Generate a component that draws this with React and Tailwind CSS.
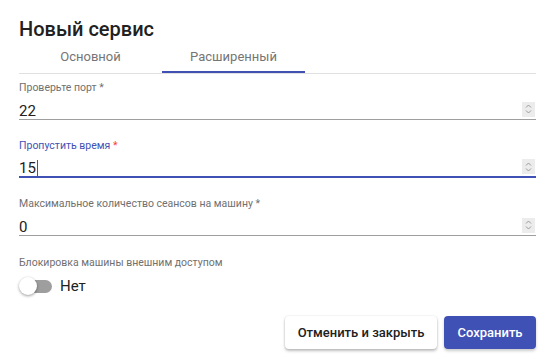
import React, { useState } from 'react';

function Spinner() {
  return (
    <div className="flex h-[15px] w-[13px] flex-col items-center justify-center bg-[#ececec]">
      <svg width="7" height="12" viewBox="0 0 7 12" fill="none" stroke="#9a9a9a" strokeWidth="1">
        <path d="M1 4.5 L3.5 2 L6 4.5" />
        <path d="M1 7.5 L3.5 10 L6 7.5" />
      </svg>
    </div>
  );
}

function NumberField({ label, value, focused }) {
  return (
    <div className="flex flex-col">
      <div
        className={`h-[13px] text-[10.5px] leading-[13px] ${focused ? 'text-[#3f51b5]' : 'text-[#707070]'}`}
      >
        {label}
        {focused ? <span className="text-[#f44336]"> *</span> : ' *'}
      </div>
      <div
        className={`mt-[6px] flex h-[20px] items-center justify-between text-[15px] leading-[20px] text-[#212121] ${
          focused ? 'border-b-2 border-[#3f51b5]' : 'border-b border-[#9e9e9e]'
        }`}
      >
        <span className="mt-[2px] flex items-center">
          {value}
          {focused && <span className="ml-[1px] inline-block h-[16px] w-[1px] bg-[#3f51b5]" />}
        </span>
        <span className="mr-[1px] mb-[1px]">
          <Spinner />
        </span>
      </div>
    </div>
  );
}

export default function App() {
  const [tab, setTab] = useState(1);
  const [blocked, setBlocked] = useState(false);

  return (
    <div className="h-[361px] w-[553px] bg-white pl-[19px] pr-[17px] font-['Roboto',sans-serif]">
      <div className="pt-[17px] text-[20px] font-medium leading-[24px] text-[#212121]">Новый сервис</div>

      <div className="flex border-b border-[#e0e0e0]">
        {['Основной', 'Расширенный'].map((t, i) => (
          <button
            key={t}
            onClick={() => setTab(i)}
            className="relative flex h-[32px] w-[143px] items-center justify-center text-[13px] text-[#757575]"
          >
            {t}
            {tab === i && <span className="absolute bottom-0 left-0 h-[2px] w-full bg-[#3f51b5]" />}
          </button>
        ))}
      </div>

      <div className="mt-[7px] flex flex-col gap-[19px]">
        <NumberField label="Проверьте порт" value="22" />
        <NumberField label="Пропустить время" value="15" focused />
        <NumberField label="Максимальное количество сеансов на машину" value="0" />
      </div>

      <div className="mt-[20px] text-[10.5px] leading-[13px] text-[#707070]">Блокировка машины внешним доступом</div>
      <div className="mt-[8px] flex h-[18px] items-center">
        <button onClick={() => setBlocked(!blocked)} className="relative h-[18px] w-[34px]">
          <span className="absolute left-[2px] top-[3px] h-[13px] w-[31px] rounded-full bg-[#9e9e9e]" />
          <span
            className={`absolute top-0 h-[18px] w-[18px] rounded-full bg-white shadow-[0_1px_3px_rgba(0,0,0,0.4)] ${
              blocked ? 'left-[16px]' : 'left-0'
            }`}
          />
        </button>
        <span className="ml-[7px] text-[15px] leading-[18px] text-[#212121]">{blocked ? 'Да' : 'Нет'}</span>
      </div>

      <div className="mt-[21px] flex justify-end gap-[7px]">
        <button className="h-[33px] w-[152px] rounded-[4px] bg-white text-[13px] font-medium text-[#212121] shadow-[0_2px_3px_rgba(0,0,0,0.25),0_0_2px_rgba(0,0,0,0.12)]">
          Отменить и закрыть
        </button>
        <button className="h-[33px] w-[92px] rounded-[4px] bg-[#3f51b5] text-[13px] font-medium text-white shadow-[0_2px_3px_rgba(0,0,0,0.2)]">
          Сохранить
        </button>
      </div>
    </div>
  );
}
